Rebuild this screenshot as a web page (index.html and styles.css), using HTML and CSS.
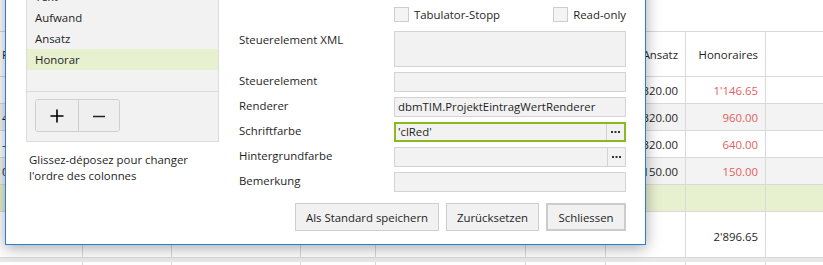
FILE: index.html
```html
<!DOCTYPE html>
<html>
<head>
<meta charset="utf-8">
<link rel="stylesheet" href="styles.css">
</head>
<body>
<div class="page">
  <div class="grid">
    <div class="top-space"></div>
    <div class="row header">
      <div class="cell left">Pos</div><div class="cell"></div><div class="cell"></div><div class="cell"></div><div class="cell"></div><div class="cell"></div><div class="cell">Ansatz</div><div class="cell">Honoraires</div><div class="cell last"></div>
    </div>
    <div class="row">
      <div class="cell left"></div><div class="cell"></div><div class="cell"></div><div class="cell"></div><div class="cell"></div><div class="cell"></div><div class="cell">320.00</div><div class="cell red">1'146.65</div><div class="cell last"></div>
    </div>
    <div class="row alt">
      <div class="cell left">4</div><div class="cell"></div><div class="cell"></div><div class="cell"></div><div class="cell"></div><div class="cell"></div><div class="cell">320.00</div><div class="cell red">960.00</div><div class="cell last"></div>
    </div>
    <div class="row">
      <div class="cell left">-</div><div class="cell"></div><div class="cell"></div><div class="cell"></div><div class="cell"></div><div class="cell"></div><div class="cell">320.00</div><div class="cell red">640.00</div><div class="cell last"></div>
    </div>
    <div class="row alt">
      <div class="cell left">0</div><div class="cell"></div><div class="cell"></div><div class="cell"></div><div class="cell"></div><div class="cell"></div><div class="cell">150.00</div><div class="cell red">150.00</div><div class="cell last"></div>
    </div>
    <div class="row green">
      <div class="cell left"></div><div class="cell"></div><div class="cell"></div><div class="cell"></div><div class="cell"></div><div class="cell"></div><div class="cell"></div><div class="cell"></div><div class="cell last"></div>
    </div>
    <div class="row total">
      <div class="cell left"></div><div class="cell"></div><div class="cell"></div><div class="cell"></div><div class="cell"></div><div class="cell"></div><div class="cell"></div><div class="cell">2'896.65</div><div class="cell last"></div>
    </div>
    <div class="band"></div>
    <div class="row tail">
      <div class="cell left"></div><div class="cell"></div><div class="cell"></div><div class="cell"></div><div class="cell"></div><div class="cell"></div><div class="cell"></div><div class="cell"></div><div class="cell last"></div>
    </div>
  </div>

  <div class="dialog">
    <div class="col-left">
      <div class="panel">
        <div class="list">
          <div class="item">Text</div>
          <div class="item">Aufwand</div>
          <div class="item">Ansatz</div>
          <div class="item selected">Honorar</div>
        </div>
        <div class="panel-tools">
          <div class="btn-group">
            <button class="tool-btn" aria-label="Hinzufügen">
              <svg width="16" height="16" viewBox="0 0 16 16"><path d="M8 1.5V14.5M1.5 8H14.5" stroke="#000" stroke-width="1.6" fill="none"/></svg>
            </button>
            <button class="tool-btn" aria-label="Entfernen">
              <svg width="14" height="16" viewBox="0 0 14 16"><path d="M1 8.5H13" stroke="#222" stroke-width="1.6" fill="none"/></svg>
            </button>
          </div>
        </div>
      </div>
      <p class="hint">Glissez-déposez pour changer<br>l'ordre des colonnes</p>
    </div>

    <div class="col-right">
      <div class="form">
        <div class="label"></div>
        <div class="checks">
          <label class="check"><span class="box"></span>Tabulator-Stopp</label>
          <label class="check"><span class="box"></span>Read-only</label>
        </div>

        <div class="label">Steuerelement XML</div>
        <div class="field tall"></div>

        <div class="label">Steuerelement</div>
        <div class="field"></div>

        <div class="label">Renderer</div>
        <div class="field">dbmTIM.ProjektEintragWertRenderer</div>

        <div class="label">Schriftfarbe</div>
        <div class="field focus with-btn"><span class="val">'clRed'</span><span class="dots"><svg width="9" height="3" viewBox="0 0 9 3"><rect x="0" y="0" width="2" height="2" fill="#333"/><rect x="3.5" y="0" width="2" height="2" fill="#333"/><rect x="7" y="0" width="2" height="2" fill="#333"/></svg></span></div>

        <div class="label">Hintergrundfarbe</div>
        <div class="field with-btn"><span class="val"></span><span class="dots"><svg width="9" height="3" viewBox="0 0 9 3"><rect x="0" y="0" width="2" height="2" fill="#333"/><rect x="3.5" y="0" width="2" height="2" fill="#333"/><rect x="7" y="0" width="2" height="2" fill="#333"/></svg></span></div>

        <div class="label">Bemerkung</div>
        <div class="field"></div>
      </div>
      <div class="actions">
        <button class="btn w1">Als Standard speichern</button>
        <button class="btn w2">Zurücksetzen</button>
        <button class="btn w3 default">Schliessen</button>
      </div>
    </div>
  </div>
</div>
</body>
</html>
```

FILE: styles.css
```css
* { box-sizing: border-box; }
html, body { margin: 0; padding: 0; background: #fff; }
body {
  font-family: "Open Sans", "Noto Sans", sans-serif;
  font-size: 11.4px;
  color: #1f1f1f;
}
.page {
  position: relative;
  width: 823px;
  height: 265px;
  overflow: hidden;
}

/* background grid */
.grid { display: flex; flex-direction: column; }
.top-space { height: 32px; border-bottom: 1px solid #d9d9d9; }
.row {
  display: grid;
  grid-template-columns: 83px 89px 129px 75px 150px 80px 80px 80px 1fr;
  height: 27px;
  border-bottom: 1px solid #d9d9d9;
}
.row.header { height: 45px; }
.row.alt { background: #f3f3f3; }
.row.green { background: #e7f0cf; }
.row.total { height: 46px; }
.row.tail { height: 20px; border-bottom: none; }
.band { height: 4px; background: #e8e8e8; }
.cell {
  border-right: 1px solid #d9d9d9;
  display: flex;
  align-items: center;
  justify-content: flex-end;
  padding-right: 7px;
  white-space: nowrap;
  color: #1f1f1f;
}
.cell.left { justify-content: flex-start; padding-left: 2px; }
.cell.last { border-right: none; }
.cell.red { color: #e35f5f; }
.row.total .cell { padding-top: 3px; }

/* dialog */
.dialog {
  position: absolute;
  left: 5px;
  top: -26px;
  width: 641px;
  height: 271px;
  border: 1px solid #2a7fd4;
  background: #fff;
  box-shadow: 0 3px 14px rgba(0, 0, 0, 0.35);
  display: flex;
  gap: 20px;
  padding: 10px 19px 0 20px;
}
.col-left { width: 193px; flex: none; }
.panel {
  border: 1px solid #dcdcdc;
  background: #f2f2f2;
  height: 157px;
  display: flex;
  flex-direction: column;
}
.list {
  height: 106px;
  border-bottom: 1px solid #dcdcdc;
}
.item {
  height: 21px;
  line-height: 21px;
  padding-left: 8px;
  color: #1f1f1f;
}
.item.selected { background: #e7f0cf; }
.panel-tools { padding: 7px 0 0 8px; }
.btn-group {
  display: inline-flex;
  border: 1px solid #cfcfcf;
  border-radius: 3px;
  overflow: hidden;
}
.tool-btn {
  width: 42px;
  height: 31px;
  border: none;
  background: #efefef;
  display: flex;
  align-items: center;
  justify-content: center;
  padding: 0;
}
.tool-btn + .tool-btn { border-left: 1px solid #cfcfcf; width: 41px; }
.hint {
  margin: 10px 0 0 3px;
  line-height: 16px;
  color: #1f1f1f;
}

.col-right { width: 387px; flex: none; padding-top: 21px; }
.form {
  display: grid;
  grid-template-columns: 155px 232px;
  grid-auto-rows: auto;
  row-gap: 5px;
}
.label {
  height: 20px;
  line-height: 17px;
  white-space: nowrap;
}
.checks {
  height: 17px;
  display: flex;
  justify-content: space-between;
  align-items: center;
  line-height: 15px;
}
.check { display: flex; align-items: center; gap: 5px; }
.box {
  width: 15px;
  height: 15px;
  border: 1px solid #cdcdcd;
  background: #f4f4f4;
}
.field {
  height: 20px;
  border: 1px solid #d3d3d3;
  background: #f2f2f2;
  padding-left: 3px;
  line-height: 17px;
  white-space: nowrap;
  overflow: hidden;
}
.field.tall { height: 36px; }
.field.with-btn { display: flex; padding-right: 0; }
.field .val { flex: 1; }
.field.focus { border: 2px solid #8bba1e; padding-left: 2px; line-height: 15px; }
.dots {
  width: 18px;
  border-left: 1px solid #d3d3d3;
  display: flex;
  align-items: center;
  justify-content: center;
}
.dots svg { display: block; }
.actions {
  display: flex;
  justify-content: flex-end;
  gap: 7px;
  margin-top: 11px;
}
.btn {
  height: 28px;
  border: 1px solid #cecece;
  background: #f1f1f1;
  font-family: inherit;
  font-size: 11.4px;
  color: #1f1f1f;
  padding: 0;
}
.btn.w1 { width: 144px; }
.btn.w2 { width: 93px; }
.btn.w3 { width: 80px; }
.btn.default { border: 2px solid #cccccc; }
```
